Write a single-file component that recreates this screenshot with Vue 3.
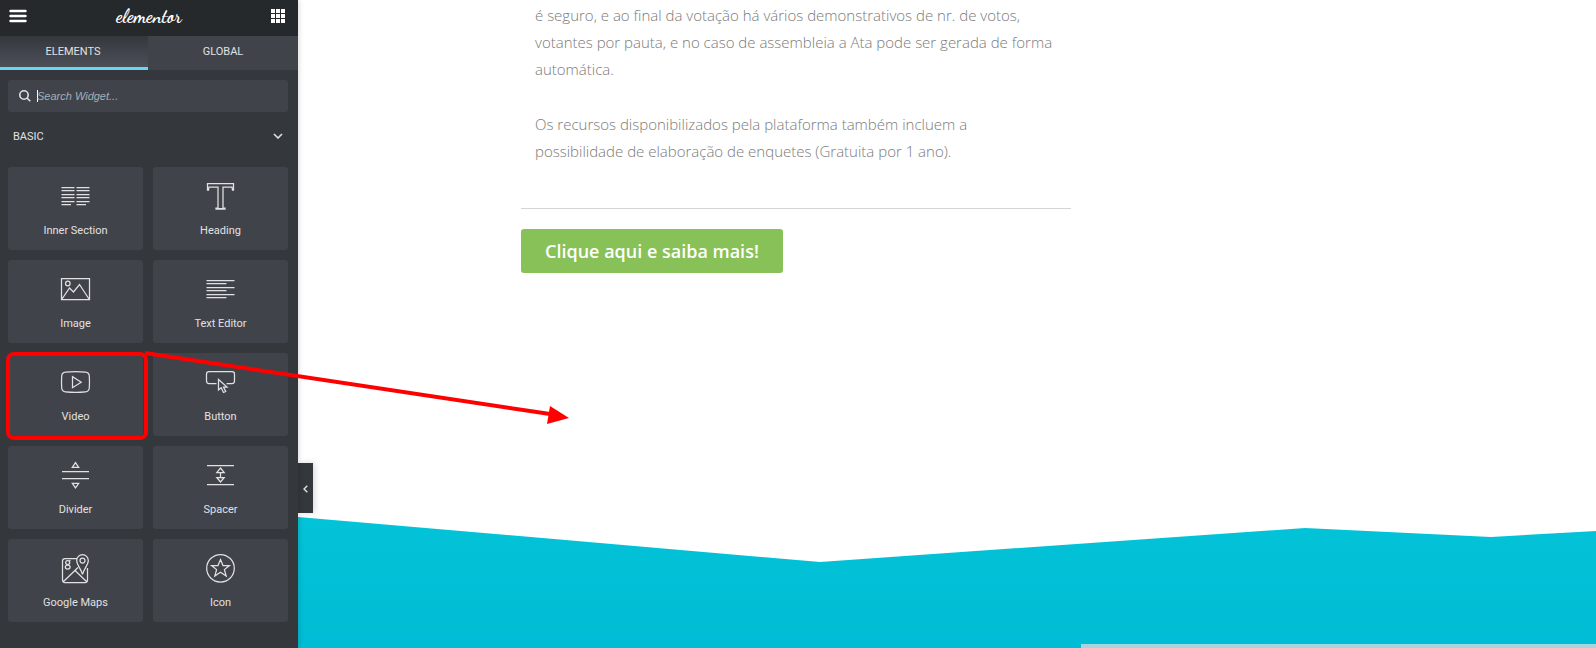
<script setup>
const widgets = [
  {
    name: 'Inner Section',
    d: 'M.5 5.5h13M15.5 5.5h13M.5 8.5h13M15.5 8.5h13M.5 12.5h13M15.5 12.5h13M.5 15.5h13M15.5 15.5h13M.5 19.5h13M15.5 19.5h13M.5 22.5h9.500M15.500 22.500h9.500'
  },
  {
    name: 'Heading',
    d: 'M1.500 1.500h26v6.500h-1l-.5-3h-9v21h2v1h-9v-1h2v-21h-9l-.5 3h-1zM12.500 26.500h4'
  },
  {
    name: 'Image',
    d: 'M.5 3.500h28v21h-28zM4.500 8.500a2.300 2.300 0 1 0 4.600 0a2.300 2.300 0 1 0-4.600 0M1 24l7.500-11 4 4 6-7.500 9.500 14.500'
  },
  {
    name: 'Text Editor',
    d: 'M.5 5.500h28M.5 8.500h20M.5 12.500h28M.5 15.500h20M.5 19.500h28M.5 22.500h20'
  },
  {
    name: 'Video',
    selected: true,
    d: 'M4.500 4.200q10-1 20 0q3.500.3 3.800 3.800q.4 6 0 12q-.3 3.500-3.800 3.800q-10 1-20 0q-3.500-.3-3.800-3.800q-.4-6 0-12q.3-3.500 3.800-3.800zM11.500 8.700v11l8.700-5.500z'
  },
  {
    name: 'Button',
    d: 'M10.500 15.500h-7.500q-2.500 0-2.500-2.500v-7q0-2.500 2.500-2.500h23q2.500 0 2.500 2.500v7q0 2.500-2.500 2.500h-5.500M12.500 11.500v10.500l2.700-2.200 2.300 4.700 2.200-1-2.200-4.500h3.500z'
  },
  {
    name: 'Divider',
    d: 'M1 10.500h27M1 17.500h27M11.300 6.300h6.400l-3.200-4.600zM11.300 22.300h6.400l-3.200 4.600z'
  },
  {
    name: 'Spacer',
    d: 'M1 4.500h27M1 23.500h27M10.800 11.500h7.400l-3.700-4.500zM10.800 16.500h7.400l-3.700 4.500zM14.500 11.500v5'
  },
  {
    name: 'Google Maps',
    d: 'M16.500 4.500h-12.500q-2.500 0-2.500 2.500v19q0 2.500 2.500 2.500h20q2.500 0 2.500-2.500v-12M2 28l15-14.500M14 16.500l12 11.500M21.500 20.500c-1-5-5.800-9.500-5.800-14a5.800 5.800 0 0 1 11.600 0c0 4.500-4.800 9-5.800 14zM19 6.500a2.500 2.500 0 1 0 5 0a2.500 2.500 0 1 0-5 0M4.700 8.500a2 2 0 1 0 4 0a2 2 0 1 0-4 0M8 7l1.500-.7M4.300 13a2.400 2 0 1 0 4.800 0a2.400 2 0 1 0-4.800 0'
  },
  {
    name: 'Icon',
    d: 'M.7 14.300a13.800 13.800 0 1 0 27.600 0a13.800 13.800 0 1 0-27.600 0M14.500 5.500l2.500 6h6.400l-5 4.100 1.800 6.400-5.700-3.700-5.700 3.700 1.800-6.400-5-4.100h6.400z'
  }
]
</script>

<template>
  <div class="editor">
    <aside class="panel">
      <header class="panel-header">
        <button class="icon-button" aria-label="Menu">
          <svg width="18" height="14" viewBox="0 0 18 14"><path d="M1.500 2h15M1.500 7h15M1.500 12h15" fill="none" stroke="#fff" stroke-width="2.400" stroke-linecap="round" /></svg>
        </button>
        <span class="logo">elementor</span>
        <button class="icon-button" aria-label="Widgets">
          <svg width="14" height="14" viewBox="0 0 14 14"><path d="M0 0h4v4h-4zM5 0h4v4h-4zM10 0h4v4h-4zM0 5h4v4h-4zM5 5h4v4h-4zM10 5h4v4h-4zM0 10h4v4h-4zM5 10h4v4h-4zM10 10h4v4h-4z" fill="#fff" /></svg>
        </button>
      </header>
      <nav class="tabs">
        <button class="tab active">ELEMENTS</button>
        <button class="tab">GLOBAL</button>
      </nav>
      <label class="search">
        <svg width="12" height="12" viewBox="0 0 12 12" fill="none" stroke="#e0e1e3" stroke-width="1.600"><circle cx="5" cy="5" r="4.200" /><path d="M8 8l3.300 3.300" /></svg>
        <span class="caret"></span>
        <input type="text" placeholder="Search Widget..." aria-label="Search Widget" />
      </label>
      <button class="category">
        <span>BASIC</span>
        <svg width="10" height="6" viewBox="0 0 10 6"><path d="M1 1l4 4 4-4" fill="none" stroke="#e0e1e3" stroke-width="1.600" /></svg>
      </button>
      <div class="widgets">
        <button v-for="w in widgets" :key="w.name" class="widget" :class="{ selected: w.selected }">
          <svg width="29" height="29" viewBox="0 0 29 29"><path :d="w.d" /></svg>
          <span>{{ w.name }}</span>
        </button>
      </div>
    </aside>

    <main class="preview">
      <button class="collapse" aria-label="Hide panel">
        <svg width="5" height="8" viewBox="0 0 5 8"><path d="M4.300.7l-3.300 3.300 3.300 3.300" fill="none" stroke="#e0e1e3" stroke-width="1.400" /></svg>
      </button>
      <section class="content">
        <div class="copy">
          <p>é seguro, e ao final da votação há vários demonstrativos de nr. de votos,<br />votantes por pauta, e no caso de assembleia a Ata pode ser gerada de forma<br />automática.</p>
          <p>Os recursos disponibilizados pela plataforma também incluem a<br />possibilidade de elaboração de enquetes (Gratuita por 1 ano).</p>
        </div>
        <hr />
        <a class="cta" href="#">Clique aqui e saiba mais!</a>
      </section>
      <div class="shape">
        <svg viewBox="0 0 1298 131" preserveAspectRatio="none">
          <defs>
            <linearGradient id="sea" x1="0" y1="0" x2="0" y2="1">
              <stop offset="0" stop-color="#03c3d8" />
              <stop offset="1" stop-color="#00bcd4" />
            </linearGradient>
          </defs>
          <path d="M0 0L522 45 1007 11 1193 20 1298 14V131H0z" fill="url(#sea)" />
        </svg>
        <div class="strip"></div>
      </div>
    </main>

    <svg class="arrow" width="430" height="80" viewBox="0 0 430 80">
      <path d="M5 4L410 65" stroke="#f00" stroke-width="4" />
      <path d="M410 57L429 69 407 75z" fill="#f00" />
    </svg>
  </div>
</template>

<style>
body {
  margin: 0;
}
</style>

<style scoped>
.editor {
  position: relative;
  display: flex;
  min-height: 100vh;
  background: #fff;
  font-family: Roboto, "Liberation Sans", sans-serif;
}
.editor *,
.editor {
  box-sizing: border-box;
}
button {
  border: 0;
  padding: 0;
  background: none;
  color: inherit;
  font: inherit;
  cursor: pointer;
}
svg {
  display: block;
}
.panel {
  position: relative;
  z-index: 1;
  flex: none;
  width: 298px;
  background: #34383c;
  color: #e0e1e3;
  font-size: 11px;
  box-shadow: 0 0 6px rgba(0, 0, 0, 0.2);
}
.panel-header {
  display: flex;
  align-items: center;
  justify-content: space-between;
  height: 36px;
  padding: 0 13px 4px 9px;
  background: #26292c;
}
.logo {
  color: #fff;
  font: 700 19px/20px "Dancing Script", cursive;
}
.tabs {
  display: flex;
}
.tab {
  width: 150px;
  height: 34px;
  padding-bottom: 1px;
  border-bottom: 3px solid #404349;
  background: #404349;
}
.tab.active {
  width: 148px;
  padding-right: 2px;
  border-color: #64d8f5;
  background: linear-gradient(#34383c, #4d4f58);
}
.search {
  display: flex;
  align-items: center;
  height: 32px;
  margin: 10px 10px 0 8px;
  padding: 0 11px;
  border-radius: 3px;
  background: #404349;
}
.caret {
  width: 1px;
  height: 12px;
  margin: 0 -1px 0 6px;
  background: #fff;
}
.search input {
  flex: 1;
  min-width: 0;
  border: 0;
  padding: 0;
  outline: 0;
  background: none;
  color: #e0e1e3;
  font: italic 11px/16px "Liberation Sans", sans-serif;
}
.search input::placeholder {
  color: #a4afb7;
  opacity: 1;
}
.category {
  display: flex;
  align-items: center;
  justify-content: space-between;
  width: 100%;
  height: 48px;
  padding: 0 15px 0 13px;
}
.widgets {
  display: grid;
  grid-template-columns: 1fr 1fr;
  gap: 10px;
  padding: 7px 10px 24px 8px;
}
.widget {
  position: relative;
  display: flex;
  flex-direction: column;
  align-items: center;
  height: 83px;
  padding-top: 15px;
  border-radius: 3px;
  background: #404349;
}
.widget svg {
  fill: none;
  stroke: #e0e1e3;
  stroke-width: 1.25;
  overflow: visible;
}
.widget span {
  margin-top: 12px;
  line-height: 16px;
}
.widget.selected::after {
  content: "";
  position: absolute;
  inset: -1px -5px -4px -2px;
  border: 4px solid #f00;
  border-radius: 8px;
}
.preview {
  position: relative;
  display: flex;
  flex: 1;
  flex-direction: column;
  justify-content: space-between;
  min-width: 0;
}
.collapse {
  position: absolute;
  top: 463px;
  left: 0;
  display: flex;
  align-items: center;
  justify-content: center;
  width: 15px;
  height: 50px;
  padding-top: 2px;
  background: #34383c;
  box-shadow: 2px 0 6px rgba(0, 0, 0, 0.15);
}
.content {
  width: 550px;
  margin-left: 223px;
  font-family: "Open Sans", sans-serif;
}
.copy {
  padding: 2px 0 0 14px;
  color: #7a7a7a;
  font-size: 15px;
  font-weight: 300;
  line-height: 27px;
  white-space: nowrap;
}
.copy p {
  margin: 0 0 28px;
}
hr {
  margin: 43px 0 20px;
  border: 0;
  border-top: 1px solid #d4d4d4;
}
.cta {
  display: inline-block;
  padding: 10px 24px;
  border-radius: 3px;
  background: #88c157;
  color: #fff;
  font-size: 18px;
  font-weight: 600;
  line-height: 24px;
  text-decoration: none;
}
.shape {
  display: flex;
  flex-direction: column;
}
.shape svg {
  width: 100%;
  height: 131px;
}
.strip {
  align-self: flex-end;
  width: 515px;
  height: 4px;
  margin-top: -4px;
  background: #a9d3dd;
  z-index: 1;
}
.arrow {
  position: absolute;
  z-index: 2;
  top: 349px;
  left: 140px;
  pointer-events: none;
}
</style>
